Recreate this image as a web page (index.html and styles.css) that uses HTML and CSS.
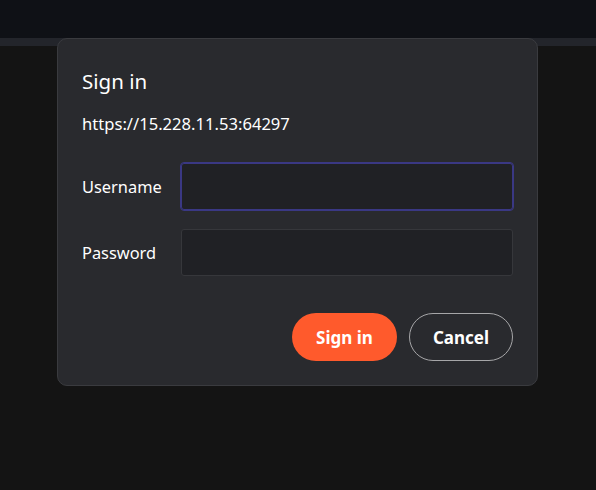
FILE: index.html
```html
<!DOCTYPE html>
<html>
<head>
<meta charset="utf-8">
<link rel="stylesheet" href="styles.css">
</head>
<body>
<div class="topbar"></div>
<div class="strip"></div>
<div class="dialog">
  <h1 class="title">Sign in</h1>
  <div class="origin">https://15.228.11.53:64297</div>
  <div class="form">
    <label class="label">Username</label>
    <div class="input focused"></div>
    <label class="label">Password</label>
    <div class="input"></div>
  </div>
  <div class="actions">
    <button class="btn primary">Sign in</button>
    <button class="btn secondary">Cancel</button>
  </div>
</div>
</body>
</html>
```
FILE: styles.css
```css
html, body {
  margin: 0;
  padding: 0;
  background: #141414;
  width: 596px;
  height: 490px;
  overflow: hidden;
  font-family: "Noto Sans", "Open Sans", sans-serif;
  color: #ffffff;
}
.topbar {
  height: 38px;
  background: #0f1116;
}
.strip {
  height: 8px;
  background: #23252b;
}
.dialog {
  position: absolute;
  left: 57px;
  top: 38px;
  width: 481px;
  box-sizing: border-box;
  background: #292a2e;
  border: 1px solid #3a3b3f;
  border-radius: 10px;
  padding: 28px 24px 24px 24px;
}
.title {
  margin: 0;
  font-size: 20.5px;
  font-weight: 400;
  line-height: 28px;
}
.origin {
  margin-top: 17px;
  font-size: 16.6px;
  line-height: 24px;
}
.form {
  margin-top: 27px;
  display: grid;
  grid-template-columns: 99px 1fr;
  row-gap: 19px;
  align-items: center;
}
.label {
  font-size: 16.4px;
}
.input {
  height: 47px;
  box-sizing: border-box;
  background: #202125;
  border: 1px solid #36373b;
  border-radius: 3px;
}
.input.focused {
  border-color: #3a3884;
  outline: 1px solid #3a3884;
}
.actions {
  margin-top: 37px;
  display: flex;
  justify-content: flex-end;
  gap: 12px;
}
.btn {
  height: 48px;
  border-radius: 24px;
  font-family: inherit;
  font-size: 17px;
  font-weight: 700;
  color: #ffffff;
  padding: 0;
  cursor: pointer;
}
.primary {
  width: 105px;
  background: #ff5a2c;
  border: none;
}
.secondary {
  width: 104px;
  background: transparent;
  border: 1px solid #a6a6a8;
}
```
